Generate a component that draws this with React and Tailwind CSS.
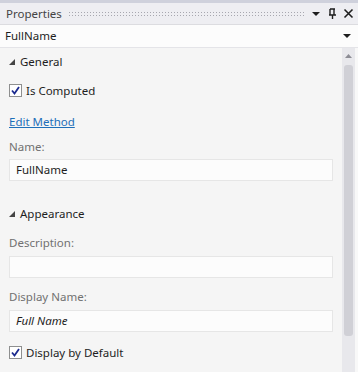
import React from "react";

function Check() {
  return (
    <span className="w-[13px] h-[13px] border border-[#8e8f8f] bg-white flex items-center justify-center shrink-0">
      <svg width="9" height="9" viewBox="0 0 9 9">
        <path d="M1 4.5 L3.5 7.5 L8 1" fill="none" stroke="#1b2a8f" strokeWidth="1.8" />
      </svg>
    </span>
  );
}

function Section({ title }) {
  return (
    <div className="flex items-center h-[20px] pl-[9px] gap-[5px] text-[#1e1e1e]">
      <svg width="6" height="6" viewBox="0 0 6 6">
        <path d="M6 0 L6 6 L0 6 Z" fill="#444" />
      </svg>
      <span>{title}</span>
    </div>
  );
}

function Field({ value, italic }) {
  return (
    <div
      className={`h-[22px] ml-[9px] mr-[9px] bg-[#fcfcfc] border border-[#e6e6e6] flex items-center px-[6px] text-[#1e1e1e] ${
        italic ? "italic" : ""
      }`}
    >
      {value}
    </div>
  );
}

export default function App() {
  return (
    <div
      className="w-[358px] h-[372px] bg-[#f5f5f5] flex flex-col text-[11.5px] overflow-hidden"
      style={{ fontFamily: '"Noto Sans", "Open Sans", sans-serif' }}
    >
      <div className="h-[3px] bg-[#cfd1dc]" />
      <div className="h-[21px] bg-[#eeeef2] flex items-center pl-[6px] pr-[4px] text-[#444]">
        <span>Properties</span>
        <div
          className="flex-1 h-[5px] mx-[6px]"
          style={{
            backgroundImage: "radial-gradient(#a8a8b0 0.6px, transparent 0.7px)",
            backgroundSize: "3px 3px",
          }}
        />
        <svg width="10" height="10" viewBox="0 0 10 10" className="mr-[6px]">
          <path d="M1 3 L9 3 L5 7 Z" fill="#1e1e1e" />
        </svg>
        <svg width="10" height="12" viewBox="0 0 10 12" className="mr-[6px]">
          <path d="M3 1 H8 M3 1 V7 M7 1 V7 M2 7 H9 M5.5 7 V11" fill="none" stroke="#1e1e1e" strokeWidth="1.4" />
        </svg>
        <svg width="11" height="11" viewBox="0 0 11 11">
          <path d="M1.5 1.5 L9.5 9.5 M9.5 1.5 L1.5 9.5" stroke="#1e1e1e" strokeWidth="1.6" />
        </svg>
      </div>
      <div className="h-[1px] bg-[#dcdce0]" />
      <div className="h-[22px] bg-[#fcfcfc] flex items-center pl-[5px] pr-[6px] text-[#1e1e1e]">
        <span className="flex-1">FullName</span>
        <svg width="10" height="10" viewBox="0 0 10 10">
          <path d="M1 3 L9 3 L5 7 Z" fill="#1e1e1e" />
        </svg>
      </div>
      <div className="h-[1px] bg-[#e4e4e8]" />
      <div className="flex flex-1">
        <div className="flex-1 flex flex-col pt-[4px]">
          <Section title="General" />
          <div className="flex items-center gap-[4px] pl-[9px] mt-[11px] h-[15px] text-[#1e1e1e]">
            <Check />
            <span>Is Computed</span>
          </div>
          <div className="pl-[9px] mt-[16px] h-[16px] flex items-center">
            <span className="text-[#1e6fb9] underline">Edit Method</span>
          </div>
          <div className="pl-[9px] mt-[9px] h-[16px] flex items-center text-[#717171]">Name:</div>
          <div className="mt-[4px]">
            <Field value="FullName" />
          </div>
          <div className="mt-[23px]">
            <Section title="Appearance" />
          </div>
          <div className="pl-[9px] mt-[11px] h-[16px] flex items-center text-[#717171]">Description:</div>
          <div className="mt-[5px]">
            <Field value="" />
          </div>
          <div className="pl-[9px] mt-[11px] h-[16px] flex items-center text-[#717171]">Display Name:</div>
          <div className="mt-[5px]">
            <Field value="Full Name" italic />
          </div>
          <div className="flex items-center gap-[4px] pl-[9px] mt-[13px] h-[15px] text-[#1e1e1e]">
            <Check />
            <span>Display by Default</span>
          </div>
        </div>
        <div className="w-[13px] bg-[#e8e8ec] flex flex-col items-center pt-[6px]">
          <svg width="7" height="4" viewBox="0 0 7 4">
            <path d="M0 4 L3.5 0 L7 4 Z" fill="#8c8c94" />
          </svg>
          <div className="w-[9px] h-[271px] mt-[7px] bg-[#d0d0d6] rounded-[3px]" />
        </div>
        <div className="w-[3px] bg-[#f8f8f8]" />
      </div>
    </div>
  );
}
